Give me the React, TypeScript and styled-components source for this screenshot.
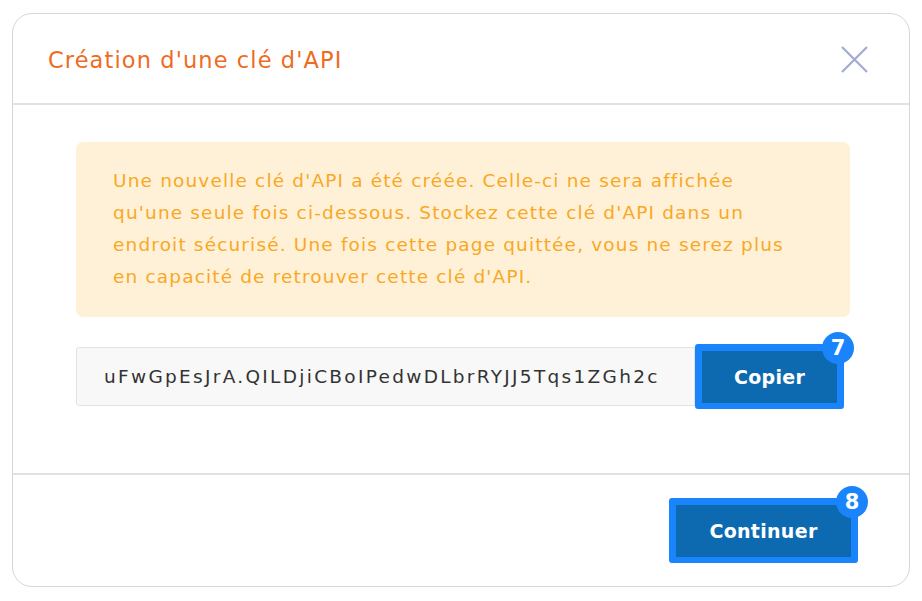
import styled, { createGlobalStyle } from 'styled-components'
import React from 'react'

const GlobalStyle = createGlobalStyle`
  body {
    margin: 0;
    background: #ffffff;
    font-family: "DejaVu Sans", "Liberation Sans", sans-serif;
  }
`

const Page = styled.div`
  padding: 13px 12px 14px 12px;
`

const Modal = styled.div`
  width: 896px;
  height: 572px;
  border: 1px solid #d6d6d6;
  border-radius: 20px;
  display: flex;
  flex-direction: column;
  background: #fff;
`

const Header = styled.div`
  height: 91px;
  box-sizing: border-box;
  display: flex;
  align-items: center;
  justify-content: space-between;
  padding: 2px 41px 0 35px;
  border-bottom: 2px solid #e1e1e1;
`

const Title = styled.h1`
  margin: 0;
  font-size: 22.5px;
  font-weight: 400;
  color: #ef6b1f;
  letter-spacing: 1.1px;
`

const CloseButton = styled.button`
  border: none;
  background: none;
  padding: 0;
  width: 28px;
  height: 28px;
  display: flex;
  align-items: center;
  justify-content: center;
  cursor: pointer;
`

const Body = styled.div`
  flex: 1;
  padding: 37px 59px 0 63px;
  display: flex;
  flex-direction: column;
  gap: 27px;
`

const Alert = styled.div`
  background: #fff1d8;
  border-radius: 7px;
  padding: 23px 10px 24px 37px;
  color: #f9a825;
  font-size: 18.5px;
  letter-spacing: 1.15px;
  line-height: 32px;
  white-space: nowrap;
`

const KeyRow = styled.div`
  display: flex;
  align-items: center;
  padding-right: 6px;
`

const KeyField = styled.div`
  flex: 1;
  height: 57px;
  display: flex;
  align-items: center;
  padding-left: 27px;
  background: #f8f8f8;
  border: 1px solid #e3e3e3;
  border-radius: 3px 0 0 3px;
  color: #333333;
  font-size: 18.5px;
  letter-spacing: 2.3px;
  white-space: nowrap;
  overflow: hidden;
`

const Footer = styled.div`
  height: 111px;
  border-top: 2px solid #e1e1e1;
  display: flex;
  align-items: center;
  justify-content: flex-end;
  padding-right: 51px;
`

const Highlight = styled.div`
  position: relative;
  padding: 7px 7px 6px 7px;
  background: #1a84fc;
  border-radius: 3px;
`

const Badge = styled.span`
  position: absolute;
  top: -12px;
  right: -10px;
  width: 32px;
  height: 32px;
  border-radius: 50%;
  background: #1a84fc;
  color: #fff;
  font-weight: 700;
  font-size: 21px;
  display: flex;
  align-items: center;
  justify-content: center;
`

const Button = styled.button<{ $width: number }>`
  display: block;
  width: ${(p) => p.$width}px;
  height: 52px;
  border: none;
  background: #0d6ab0;
  color: #fff;
  font-family: inherit;
  font-weight: 700;
  font-size: 19px;
  letter-spacing: 0.3px;
  cursor: pointer;
`

interface MarkedButtonProps {
  label: string
  mark: number
  width: number
}

const MarkedButton = ({ label, mark, width }: MarkedButtonProps) => (
  <Highlight>
    <Button $width={width}>{label}</Button>
    <Badge>{mark}</Badge>
  </Highlight>
)

const App = () => {
  return (
    <Page>
      <GlobalStyle />
      <Modal>
        <Header>
          <Title>Création d'une clé d'API</Title>
          <CloseButton aria-label="Fermer">
            <svg width="27" height="27" viewBox="0 0 27 27">
              <path d="M1 1 L26 26 M26 1 L1 26" stroke="#a2abd1" strokeWidth="2.2" fill="none" />
            </svg>
          </CloseButton>
        </Header>
        <Body>
          <Alert>
            Une nouvelle clé d'API a été créée. Celle-ci ne sera affichée
            <br />
            qu'une seule fois ci-dessous. Stockez cette clé d'API dans un
            <br />
            endroit sécurisé. Une fois cette page quittée, vous ne serez plus
            <br />
            en capacité de retrouver cette clé d'API.
          </Alert>
          <KeyRow>
            <KeyField>uFwGpEsJrA.QILDjiCBoIPedwDLbrRYJJ5Tqs1ZGh2c</KeyField>
            <MarkedButton label="Copier" mark={7} width={135} />
          </KeyRow>
        </Body>
        <Footer>
          <MarkedButton label="Continuer" mark={8} width={175} />
        </Footer>
      </Modal>
    </Page>
  )
}

export default App
